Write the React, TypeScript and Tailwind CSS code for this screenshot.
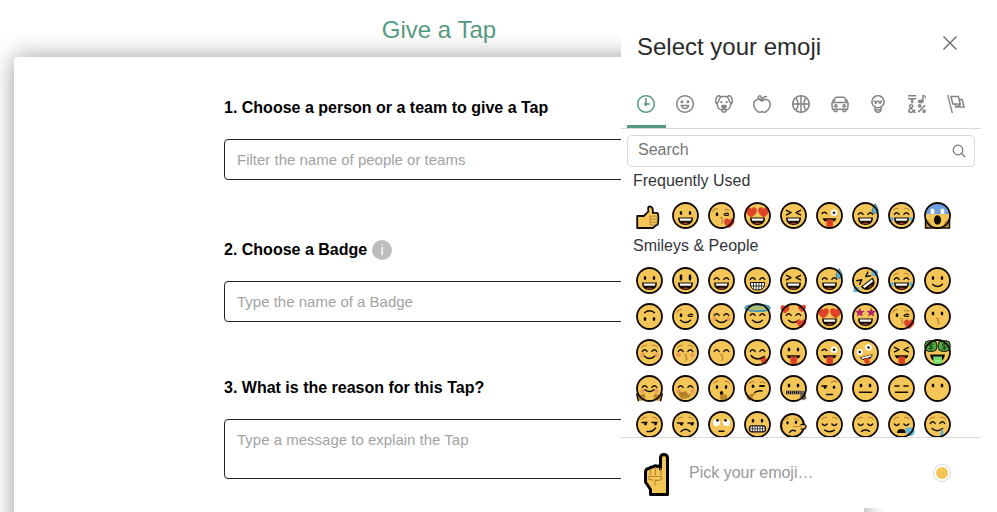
import type { ReactNode } from "react";

type Category = {
  name: string;
  paths: string[];
};

type Emoji = {
  name: string;
  art: ReactNode;
  bare?: boolean;
};

const RING =
  "M12 0C5.373 0 0 5.373 0 12s5.373 12 12 12 12-5.373 12-12S18.627 0 12 0m0 22C6.486 22 2 17.514 2 12S6.486 2 12 2s10 4.486 10 10-4.486 10-10 10";

const categories: Category[] = [
  {
    name: "Frequently Used",
    paths: ["M13 4h-2l-.001 7H9v2h2v2h2v-2h4v-2h-4z", RING],
  },
  {
    name: "Smileys & People",
    paths: [
      RING,
      "M8 7a2 2 0 1 0-.001 3.999A2 2 0 0 0 8 7M16 7a2 2 0 1 0-.001 3.999A2 2 0 0 0 16 7M15.232 15c-.693 1.195-1.87 2-3.349 2-1.477 0-2.655-.805-3.347-2H15m3-2H6a6 6 0 1 0 12 0",
    ],
  },
  {
    name: "Animals & Nature",
    paths: [
      "M15.5 8a1.5 1.5 0 1 0 .001 3.001A1.5 1.5 0 0 0 15.5 8M8.5 8a1.5 1.5 0 1 0 .001 3.001A1.5 1.5 0 0 0 8.5 8",
      "M18.933 0h-.027c-.97 0-2.138.787-3.018 1.497-1.274-.374-2.612-.51-3.887-.51-1.285 0-2.616.133-3.874.517C7.245.79 6.069 0 5.093 0h-.027C3.352 0 .07 2.67.002 7.026c-.039 2.479.276 4.238 1.04 5.013.254.258.882.677 1.295.882.191 3.177.922 5.238 2.536 6.38.897.637 2.187.949 3.2 1.102C8.04 20.6 8 20.795 8 21c0 1.773 2.35 3 4 3 1.648 0 4-1.227 4-3 0-.201-.038-.393-.072-.586 2.573-.385 5.435-1.877 5.925-7.587.396-.22.887-.568 1.104-.788.763-.774 1.079-2.534 1.04-5.013C23.929 2.67 20.646 0 18.933 0M3.223 9.135c-.237.281-.837 1.155-.884 1.238-.15-.41-.368-1.349-.337-3.291.051-3.281 2.478-4.972 3.091-5.031.256.015.731.27 1.265.646-1.11 1.171-2.275 2.915-2.352 5.125-.133.546-.398.858-.783 1.313M12 22c-.901 0-1.954-.693-2-1 0-.654.475-1.236 1-1.602V20a1 1 0 1 0 2 0v-.602c.524.365 1 .947 1 1.602-.046.307-1.099 1-2 1m3-3.48v.02a4.752 4.752 0 0 0-1.262-1.02c1.092-.516 2.239-1.334 2.239-2.217 0-1.842-1.781-2.195-3.977-2.195-2.196 0-3.978.354-3.978 2.195 0 .883 1.148 1.701 2.238 2.217A4.8 4.8 0 0 0 9 18.539v-.025c-1-.076-2.182-.281-2.973-.842-1.301-.92-1.838-3.045-1.853-6.478l.023-.041c.496-.826 1.49-1.45 1.804-3.102 0-2.047 1.357-3.631 2.362-4.522C9.37 3.178 10.555 3 11.948 3c1.447 0 2.685.192 3.733.57 1 .9 2.316 2.465 2.316 4.48.313 1.651 1.307 2.275 1.803 3.102.035.058.068.117.102.178-.059 5.967-1.949 7.01-4.902 7.19m6.628-8.202c-.037-.065-.074-.13-.113-.195a7.587 7.587 0 0 0-.739-.987c-.385-.455-.648-.768-.782-1.313-.076-2.209-1.241-3.954-2.353-5.124.531-.376 1.004-.63 1.261-.647.636.071 3.044 1.764 3.096 5.031.027 1.81-.347 3.218-.37 3.235",
    ],
  },
  {
    name: "Food & Drink",
    paths: [
      "M17 4.978c-1.838 0-2.876.396-3.68.934.513-1.172 1.768-2.934 4.68-2.934a1 1 0 0 0 0-2c-2.921 0-4.629 1.365-5.547 2.512-.064.078-.119.162-.18.244C11.73 1.838 10.798.023 9.207.023 8.579.022 7.85.306 7 .978 5.027 2.54 5.329 3.902 6.492 4.999 3.609 5.222 0 7.352 0 12.969c0 4.582 4.961 11.009 9 11.009 1.975 0 2.371-.486 3-1 .629.514 1.025 1 3 1 4.039 0 9-6.418 9-11 0-5.953-4.055-8-7-8M8.242 2.546c.641-.508.943-.523.965-.523.426.169.975 1.405 1.357 3.055-1.527-.629-2.741-1.352-2.98-1.846.059-.112.241-.356.658-.686M15 21.978c-1.08 0-1.21-.109-1.559-.402l-.176-.146c-.367-.302-.816-.452-1.266-.452s-.898.15-1.266.452l-.176.146c-.347.292-.477.402-1.557.402-2.813 0-7-5.389-7-9.009 0-5.823 4.488-5.991 5-5.991 1.939 0 2.484.471 3.387 1.251l.323.276a1.995 1.995 0 0 0 2.58 0l.323-.276c.902-.78 1.447-1.251 3.387-1.251.512 0 5 .168 5 6 0 3.617-4.187 9-7 9",
    ],
  },
  {
    name: "Activity",
    paths: [
      "M12 0C5.373 0 0 5.373 0 12s5.373 12 12 12 12-5.373 12-12S18.627 0 12 0m9.949 11H17.05c.224-2.527 1.232-4.773 1.968-6.113A9.966 9.966 0 0 1 21.949 11M13 11V2.051a9.945 9.945 0 0 1 4.432 1.564c-.858 1.491-2.156 4.22-2.392 7.385H13zm-2 0H8.961c-.238-3.165-1.536-5.894-2.393-7.385A9.95 9.95 0 0 1 11 2.051V11zm0 2v8.949a9.937 9.937 0 0 1-4.432-1.564c.857-1.492 2.155-4.221 2.393-7.385H11zm4.04 0c.236 3.164 1.534 5.893 2.392 7.385A9.92 9.92 0 0 1 13 21.949V13h2.04zM4.982 4.887C5.718 6.227 6.726 8.473 6.951 11h-4.9a9.977 9.977 0 0 1 2.931-6.113M2.051 13h4.9c-.226 2.527-1.233 4.771-1.969 6.113A9.972 9.972 0 0 1 2.051 13m16.967 6.113c-.735-1.342-1.744-3.586-1.968-6.113h4.899a9.961 9.961 0 0 1-2.931 6.113",
    ],
  },
  {
    name: "Travel & Places",
    paths: [
      "M6.5 12C5.122 12 4 13.121 4 14.5S5.122 17 6.5 17 9 15.879 9 14.5 7.878 12 6.5 12m0 3c-.275 0-.5-.225-.5-.5s.225-.5.5-.5.5.225.5.5-.225.5-.5.5M17.5 12c-1.378 0-2.5 1.121-2.5 2.5s1.122 2.5 2.5 2.5 2.5-1.121 2.5-2.5-1.122-2.5-2.5-2.5m0 3c-.275 0-.5-.225-.5-.5s.225-.5.5-.5.5.225.5.5-.225.5-.5.5",
      "M22.482 9.494l-1.039-.346L21.4 9h.6c.552 0 1-.439 1-.992 0-.006-.003-.008-.003-.008H23c0-1-.889-2-1.984-2h-.642l-.731-1.717C19.262 3.012 18.091 2 16.764 2H7.236C5.909 2 4.738 3.012 4.357 4.283L3.626 6h-.642C1.889 6 1 7 1 8h.003S1 8.002 1 8.008C1 8.561 1.448 9 2 9h.6l-.043.148-1.039.346a2.001 2.001 0 0 0-1.359 2.097l.751 7.508a1 1 0 0 0 .994.901H3v1c0 1.103.896 2 2 2h2c1.104 0 2-.897 2-2v-1h6v1c0 1.103.896 2 2 2h2c1.104 0 2-.897 2-2v-1h1.096a.999.999 0 0 0 .994-.901l.751-7.508a2.001 2.001 0 0 0-1.359-2.097M6.273 4.857C6.402 4.43 6.788 4 7.236 4h9.527c.448 0 .834.43.963.857L19.313 9H4.688l1.585-4.143zM7 21H5v-1h2v1zm12 0h-2v-1h2v1zm2.189-3H2.811l-.662-6.607L3 11h18l.852.393L21.189 18z",
    ],
  },
  {
    name: "Objects",
    paths: [
      "M12 0a9 9 0 0 0-5 16.482V21s2.035 3 5 3 5-3 5-3v-4.518A9 9 0 0 0 12 0zm0 2c3.86 0 7 3.141 7 7s-3.14 7-7 7-7-3.141-7-7 3.14-7 7-7zM9 17.477c.94.332 1.946.523 3 .523s2.06-.19 3-.523v.834c-.91.436-1.925.689-3 .689a6.924 6.924 0 0 1-3-.69v-.833zm.236 3.07A8.854 8.854 0 0 0 12 21c.965 0 1.888-.167 2.758-.451C14.155 21.173 13.153 22 12 22c-1.102 0-2.117-.789-2.764-1.453z",
      "M14.745 12.449h-.004c-.852-.024-1.188-.858-1.577-1.824-.421-1.061-.703-1.561-1.182-1.566h-.009c-.481 0-.783.497-1.235 1.537-.436.982-.801 1.811-1.636 1.791l-.276-.043c-.565-.171-.853-.691-1.284-1.794-.125-.313-.202-.632-.27-.913-.051-.213-.127-.53-.195-.634C7.067 9.004 7.039 9 6.99 9A1 1 0 0 1 7 7h.01c1.662.017 2.015 1.373 2.198 2.134.486-.981 1.304-2.058 2.797-2.075 1.531.018 2.28 1.153 2.731 2.141l.002-.008C14.944 8.424 15.327 7 16.979 7h.032A1 1 0 1 1 17 9h-.011c-.149.076-.256.474-.319.709a6.484 6.484 0 0 1-.311.951c-.429.973-.79 1.789-1.614 1.789",
    ],
  },
  {
    name: "Symbols",
    paths: [
      "M0 0h11v2H0zM4 11h3V6h4V4H0v2h4zM15.5 17c1.381 0 2.5-1.116 2.5-2.493s-1.119-2.493-2.5-2.493S13 13.13 13 14.507 14.119 17 15.5 17m0-2.986c.276 0 .5.222.5.493 0 .272-.224.493-.5.493s-.5-.221-.5-.493.224-.493.5-.493M21.5 19.014c-1.381 0-2.5 1.116-2.5 2.493S20.119 24 21.5 24s2.5-1.116 2.5-2.493-1.119-2.493-2.5-2.493m0 2.986a.497.497 0 0 1-.5-.493c0-.271.224-.493.5-.493s.5.222.5.493a.497.497 0 0 1-.5.493M22 13l-9 9 1.513 1.5 8.99-9.009zM17 11c2.209 0 4-1.119 4-2.5V2s.985-.161 1.498.949C23.01 4.055 23 6 23 6s1-1.119 1-3.135C24-.02 21 0 21 0h-2v6.347A5.853 5.853 0 0 0 17 6c-2.209 0-4 1.119-4 2.5s1.791 2.5 4 2.5M10.297 20.482l-1.475-1.585a47.54 47.54 0 0 1-1.442 1.129c-.307-.288-.989-1.016-2.045-2.183.902-.836 1.479-1.466 1.729-1.892s.376-.871.376-1.336c0-.592-.273-1.178-.818-1.759-.546-.581-1.329-.871-2.349-.871-1.008 0-1.79.293-2.344.879-.556.587-.832 1.181-.832 1.784 0 .813.419 1.748 1.256 2.805-.847.614-1.444 1.208-1.794 1.784a3.465 3.465 0 0 0-.523 1.833c0 .857.308 1.56.924 2.107.616.549 1.423.823 2.42.823 1.173 0 2.444-.379 3.813-1.137L8.235 24h2.819l-2.09-2.383 1.333-1.135zm-6.736-6.389a1.02 1.02 0 0 1 .73-.286c.31 0 .559.085.747.254a.849.849 0 0 1 .283.659c0 .518-.419 1.112-1.257 1.784-.536-.651-.805-1.231-.805-1.742a.901.901 0 0 1 .302-.669M3.74 22c-.427 0-.778-.116-1.057-.349-.279-.232-.418-.487-.418-.766 0-.594.509-1.288 1.527-2.083.968 1.134 1.717 1.946 2.248 2.438-.921.507-1.686.76-2.3.76",
    ],
  },
  {
    name: "Flags",
    paths: [
      "M0 0l6.084 24H8L1.916 0zM21 5h-4l-1-4H4l3 12h3l1 4h13L21 5zM6.563 3h7.875l2 8H8.563l-2-8zm8.832 10l-2.856 1.904L12.063 13h3.332zM19 13l-1.5-6h1.938l2 8H16l3-2z",
    ],
  },
];

const YELLOW = "#f4c658";
const BROWN = "#b98536";
const HAND = "#bd8730";
const INK = "#120c06";
const RED = "#df4429";
const BLUE = "#5fb4d9";

// Every face is drawn on a 27 unit square, one unit per pixel.

const Line = ({ d, color = INK, w = 1.4 }: { d: string; color?: string; w?: number }) => (
  <path d={d} fill="none" stroke={color} strokeWidth={w} strokeLinecap="round" strokeLinejoin="round" />
);

const Dots = ({ ry = 2, y = 11 }: { ry?: number; y?: number }) => (
  <g fill={INK}>
    <ellipse cx="9" cy={y} rx="1.3" ry={ry} />
    <ellipse cx="18" cy={y} rx="1.3" ry={ry} />
  </g>
);

const HappyEyes = () => <Line d="M6.3 12.4q2.4-3.4 4.8 0M15.9 12.4q2.4-3.4 4.8 0" />;
const ShutEyes = () => <Line d="M6.3 13q2.4 3 4.8 0M15.9 13q2.4 3 4.8 0" />;
const SquintEyes = () => <Line d="M6.5 8.3l4.5 2.3-4.5 2.3M20.5 8.3l-4.5 2.3 4.5 2.3" />;
const Brows = () => <Line d="M5.8 8.2q1.6-2.4 4.6-1.8M21.2 8.2q-1.6-2.4-4.6-1.8" color={BROWN} w={1.1} />;
const WinkEye = () => <Line d="M16 12.6q2.2-2.6 4.6-.8M16.6 13.2l3.6.2" w={1.2} />;

const OpenMouth = () => (
  <g>
    <path d="M6 15.5h15q0 7.6-7.5 7.6T6 15.5z" fill={INK} />
    <path d="M7.6 16.6h11.8l-.6 2.2H8.2z" fill="#fff" />
    <path d="M10 21.3q3.5-1.6 7 0-3.5 1.6-7 0z" fill="#b0402a" />
  </g>
);

const Smile = () => <Line d="M8.5 17.2q5 4.6 10 0" />;
const Kiss = () => <Line d="M12.6 15.4q3.2.4 1 2.6 3 .8 0 3.2" color={BROWN} w={1.2} />;
const Cheeks = () => (
  <g fill="#ec9c5b">
    <circle cx="6.6" cy="16" r="2.2" />
    <circle cx="20.4" cy="16" r="2.2" />
  </g>
);

const Tongue = () => (
  <g>
    <path d="M6.5 16.2h14l-1.6 3H8.3z" fill={INK} />
    <path d="M10.4 17.4H17v5.2q0 3.2-3.3 3.2t-3.3-3.2z" fill={RED} />
    <path d="M13.7 18v4" stroke="#a92f1c" strokeWidth=".8" />
  </g>
);

const Heart = ({ x, y, s = 1 }: { x: number; y: number; s?: number }) => (
  <path
    transform={`translate(${x} ${y}) scale(${s})`}
    d="M0 4.6C-3.6 2-4.8.2-4.4-1.8-3.8-4.2-1-4.3 0-2.2 1-4.3 3.8-4.2 4.4-1.8 4.8.2 3.6 2 0 4.6z"
    fill={RED}
  />
);

const Star = ({ x }: { x: number }) => (
  <path
    transform={`translate(${x} 9.4)`}
    d="M0-4.6l1.3 3 3.4.2-2.5 2.2.8 3.4L0 2.4l-3 1.8.8-3.4-2.5-2.2 3.4-.2z"
    fill="#b2266b"
  />
);

const Tears = () => (
  <g fill={BLUE}>
    <path d="M5.8 15q-.6 5.4-3.4 5.6Q.4 20 .8 17.2 2 15 5.8 15z" />
    <path d="M21.2 15q.6 5.4 3.4 5.6 2-.6 1.6-3.4-1.2-2.2-5-2.2z" />
  </g>
);

const BigEye = ({ x, y, r = 3.3 }: { x: number; y: number; r?: number }) => (
  <g>
    <circle cx={x} cy={y} r={r} fill="#fff" />
    <circle cx={x} cy={y} r="1.3" fill={INK} />
  </g>
);

const Sweat = () => (
  <path
    d="M23.2 1.6q3.2 5 3.2 6.8 0 3-3.2 3-3.2 0-3.2-3 0-1.600 3.200-6.800z"
    fill={BLUE}
    stroke={INK}
    strokeWidth=".4"
  />
);

const thumbsUp: Emoji = {
  name: "Thumbs up",
  bare: true,
  art: (
    <g>
      <path
        d="M1.2 14h6.6l4.4-4.300V6.200q0-1.800 1.600-1.800 3.800.6 3 6.400h3.600q2 .2 1.700 2.400.9 1.400 0 2.600.9 1.400 0 2.700.6 1.300-.2 2.400.2 2.500-2 2.500L17 26H1.200z"
        fill={YELLOW}
        stroke={INK}
        strokeWidth="1.8"
        strokeLinejoin="round"
      />
      <path d="M14 14.200h7.500M14 17.200h7.900M14 20.200h7.500M14 23h5M14 14v9" fill="none" stroke={BROWN} strokeWidth="1" />
    </g>
  ),
};

const grinning: Emoji = { name: "Grinning", art: <><Dots /><OpenMouth /></> };

const kissHeart: Emoji = {
  name: "Blowing a kiss",
  art: (
    <>
      <ellipse cx="9" cy="12.2" rx="1.3" ry="2" fill={INK} />
      <WinkEye />
      <Line d="M5 9.4q1.200-3 4.200-2.800M16.500 8q2.500-1.400 4.300.4" color={BROWN} w={1.1} />
      <Kiss />
      <Heart x={21.3} y={20.8} s={1.15} />
    </>
  ),
};

const heartEyes: Emoji = {
  name: "Heart eyes",
  art: <><OpenMouth /><Heart x={7.3} y={9.8} s={1.25} /><Heart x={19.7} y={9.8} s={1.25} /></>,
};

const squinting: Emoji = { name: "Squinting", art: <><SquintEyes /><OpenMouth /></> };

const winkTongue: Emoji = {
  name: "Winking with tongue",
  art: <><Line d="M6 11.500q2.200-2.600 4.800 0" /><BigEye x={18} y={10.7} /><Tongue /></>,
};

const sweatGrin: Emoji = { name: "Grinning with sweat", art: <><HappyEyes /><OpenMouth /><Sweat /></> };
const joy: Emoji = { name: "Tears of joy", art: <><Brows /><HappyEyes /><OpenMouth /><Tears /></> };

const scream: Emoji = {
  name: "Screaming",
  art: (
    <>
      <path d="M2 12a11.500 11.500 0 0 1 23 0z" fill="#6f9fe0" />
      <path d="M1 26V17q3.500 0 6 4.500V26zM26 26V17q-3.500 0-6 4.500V26z" fill="#c9912f" />
      <path d="M1.500 17v9h24v-9" fill="none" stroke={INK} strokeWidth="1.5" />
      <g fill="#fff" stroke="#9aa6b8" strokeWidth=".6">
        <rect x="6.5" y="6.5" width="4" height="6" rx="1.8" />
        <rect x="16.5" y="6.5" width="4" height="6" rx="1.8" />
      </g>
      <ellipse cx="13.5" cy="18" rx="3.6" ry="4.7" fill={INK} />
    </>
  ),
};

const frequent: Emoji[] = [
  thumbsUp,
  grinning,
  kissHeart,
  heartEyes,
  squinting,
  winkTongue,
  sweatGrin,
  joy,
  scream,
];

const smileys: Emoji[] = [
  grinning,
  { name: "Big eyes", art: <><Dots ry={3.2} y={10.5} /><OpenMouth /></> },
  { name: "Smiling eyes", art: <><HappyEyes /><OpenMouth /></> },
  {
    name: "Beaming",
    art: (
      <>
        <HappyEyes />
        <path d="M6.500 15.500h14v3q-1 4.500-7 4.500t-7-4.500z" fill="#fff" stroke={INK} />
        <path d="M6.500 19h14M9.500 15.500V22M12.200 15.500V23M14.900 15.500V23M17.600 15.500V22" stroke={INK} strokeWidth=".8" />
      </>
    ),
  },
  squinting,
  sweatGrin,
  {
    name: "Rolling on the floor",
    art: (
      <>
        <g transform="rotate(-38 13.5 13.5)"><SquintEyes /><OpenMouth /></g>
        <path d="M19 5q4-3.500 7-1 .5 5-3.500 5.500-2.500-.5-3.500-4.500zM1.500 25q-1-5 3.500-5.500l2.500 1.500q0 5-6 4z" fill={BLUE} />
      </>
    ),
  },
  joy,
  { name: "Slight smile", art: <><Dots /><Smile /></> },

  {
    name: "Upside down",
    art: <><Line d="M8.500 9.800q5-4 10 0" /><Dots y={16} /></>,
  },
  {
    name: "Winking",
    art: (
      <>
        <ellipse cx="9" cy="12.2" rx="1.3" ry="2" fill={INK} />
        <WinkEye />
        <Line d="M5 9.4q1.200-3 4.200-2.800" color={BROWN} w={1.1} />
        <Smile />
      </>
    ),
  },
  { name: "Blushing", art: <><Cheeks /><HappyEyes /><Smile /></> },
  {
    name: "Halo",
    art: (
      <>
        <HappyEyes />
        <Smile />
        <ellipse cx="13.5" cy="5" rx="12.3" ry="3.2" fill="#a9bd76" stroke="#4597b5" strokeWidth="1.8" />
      </>
    ),
  },
  {
    name: "Smiling with hearts",
    art: (
      <>
        <HappyEyes />
        <Smile />
        <Heart x={5} y={6} />
        <Heart x={22} y={5} s={0.9} />
        <Heart x={21.3} y={20.5} s={1.05} />
      </>
    ),
  },
  heartEyes,
  { name: "Star struck", art: <><OpenMouth /><Star x={7.8} /><Star x={19.2} /></> },
  kissHeart,
  { name: "Kissing", art: <><Dots y={10.5} /><Kiss /></> },

  { name: "Relaxed", art: <><Cheeks /><Brows /><HappyEyes /><Smile /></> },
  { name: "Kissing, eyes closed", art: <><Cheeks /><Brows /><HappyEyes /><Kiss /></> },
  { name: "Kissing, smiling eyes", art: <><HappyEyes /><Kiss /></> },
  {
    name: "Yum",
    art: (
      <>
        <HappyEyes />
        <path d="M16 20l4.500-2.500q4 3 2.500 6.500-2.500 2.500-5 0z" fill={RED} />
        <Line d="M7 16.500q5.500 6.500 13.500.8" />
      </>
    ),
  },
  { name: "Tongue out", art: <><Dots y={10.5} /><Tongue /></> },
  winkTongue,
  {
    name: "Zany",
    art: (
      <>
        <BigEye x={7.8} y={13} r={3} />
        <BigEye x={16.5} y={8.5} r={3.3} />
        <g transform="rotate(-14 13.5 18)">
          <path d="M8 17h13q-1 4.200-6.500 4.200T8 17z" fill={INK} />
          <path d="M9.200 17.500h10.600l-.6 1.600H9.800z" fill="#fff" />
          <path d="M11.500 19.500h5v3.800q-1 2-2.500 2t-2.500-2z" fill={RED} />
        </g>
      </>
    ),
  },
  { name: "Squinting with tongue", art: <><SquintEyes /><Tongue /></> },
  {
    name: "Money mouth",
    art: (
      <>
        <g fill="#4faa43" stroke={INK}>
          <rect x=".8" y="1.8" width="12" height="10.5" rx="4" />
          <rect x="14.2" y="1.8" width="12" height="10.5" rx="4" />
        </g>
        <Line
          d="M9 5.200q-4-1-4 .9 0 1.200 2 1.300 2.200.2 2 1.500-.2 1.600-4 .7M7 4v6.800M22.200 5.200q-4-1-4 .9 0 1.200 2 1.300 2.200.2 2 1.500-.2 1.600-4 .7M20.200 4v6.800"
          color="#173c14"
          w={0.9}
        />
        <path d="M6 15.500h15q-1 5.500-4 6.500h-7q-3-1-4-6.500z" fill={INK} />
        <path d="M9.300 17.500h8.700v8H9.300z" fill="#72dc6a" />
        <path d="M11 22h5.500" stroke="#9af293" strokeWidth="1.5" />
      </>
    ),
  },

  {
    name: "Hugging",
    art: (
      <>
        <Cheeks />
        <HappyEyes />
        <Line d="M9 14.800q4.500 3.500 9 0" />
        <path
          d="M.7 19l2.500.8 5.500-1 .8 3.500-2.500 3.200-4.500.3zM26.300 19l-2.500.8-5.500-1-.8 3.500 2.500 3.200 4.500.3z"
          fill={HAND}
        />
        <Line d="M.7 19l1.600 6.700M26.300 19l-1.600 6.700" />
      </>
    ),
  },
  {
    name: "Hand over mouth",
    art: (
      <>
        <Cheeks />
        <HappyEyes />
        <path d="M6.500 16l3 1 5-1 1.500 3.500 4-1-3.500 4.500L10 24q-4-2-3.500-8z" fill={HAND} />
        <Line d="M9 18.500l1.500 2M12 17.800l1.500 2" color="#79501a" w={0.8} />
      </>
    ),
  },
  {
    name: "Shushing",
    art: (
      <>
        <Brows />
        <Dots y={12} />
        <path d="M12.500 15.500H15V19l4 1.200V24l-3.500 2-3.500-2z" fill={HAND} />
        <circle cx="13.5" cy="18" r="1.7" fill={INK} />
      </>
    ),
  },
  {
    name: "Thinking",
    art: (
      <>
        <Line d="M5.500 8.500q2-3 5-1.500M16.500 7.500q2.500-1.500 4.500.8" color={BROWN} w={1.1} />
        <ellipse cx="9" cy="11.3" rx="1.3" ry="1.8" fill={INK} />
        <Line d="M16 11h4" w={1.8} />
        <Line d="M10.500 17.500q4-2.500 7.500-1.500" />
        <path d="M3 17.500L5 20l6-2.500.5 1.800-2.500 1.500-.5 3.700-4 1q-2.500-2-1.500-8z" fill={HAND} />
      </>
    ),
  },
  {
    name: "Zipper mouth",
    art: (
      <>
        <Dots y={10.5} />
        <path d="M6 17.500h15" stroke="#837a65" strokeWidth="4" />
        <path d="M6 17.500h15" stroke={INK} strokeWidth="2.5" strokeDasharray="1 1" />
        <path d="M20 16h4.500l2 7.500-3.500 2-2.500-3z" fill="#696151" />
      </>
    ),
  },
  {
    name: "Raised eyebrow",
    art: (
      <>
        <Dots y={12.3} ry={1.7} />
        <Line d="M5.800 11h5" />
        <Line d="M15.500 7.500q2.500-2.500 5.500-.5" color={BROWN} w={1.2} />
        <Line d="M10.500 19.500h6" />
      </>
    ),
  },
  { name: "Neutral", art: <><Dots y={10.5} /><Line d="M7.500 17.200h12" w={1.6} /></> },
  { name: "Expressionless", art: <Line d="M7 11h4M16 11h4M7.500 17.200h12" w={1.6} /> },
  { name: "No mouth", art: <Dots y={10.5} /> },

  {
    name: "Smirking",
    art: (
      <>
        <Brows />
        <Line d="M6 11.500h5M16 11.500h5M11 20.500q5.500.8 8.500-3.500" />
        <circle cx="9.5" cy="13" r="1.4" fill={INK} />
        <circle cx="19.5" cy="13" r="1.4" fill={INK} />
      </>
    ),
  },
  {
    name: "Unamused",
    art: (
      <>
        <Brows />
        <Line d="M5.500 12H11M16 12h5.500M9 20.500q4.500-4.500 9 0" />
        <circle cx="9.5" cy="13.2" r="1.4" fill={INK} />
        <circle cx="20" cy="13.2" r="1.4" fill={INK} />
      </>
    ),
  },
  {
    name: "Rolling eyes",
    art: (
      <>
        <circle cx="8.5" cy="11.5" r="3.6" fill="#fff" />
        <circle cx="18.5" cy="11.5" r="3.6" fill="#fff" />
        <circle cx="9.5" cy="9.3" r="1.4" fill={INK} />
        <circle cx="17.5" cy="9.3" r="1.4" fill={INK} />
        <Line d="M11 20.300h5" />
      </>
    ),
  },
  {
    name: "Grimacing",
    art: (
      <>
        <Dots y={9.8} />
        <rect x="5.5" y="14.8" width="16" height="6" rx="2.5" fill="#fff" stroke={INK} strokeWidth="1.3" />
        <path d="M5.500 17.800h16M8.500 15v6M11 15v6M13.500 15v6M16 15v6M18.500 15v6" stroke={INK} strokeWidth=".7" />
      </>
    ),
  },
  {
    name: "Lying",
    bare: true,
    art: (
      <>
        <circle cx="12.5" cy="14.5" r="11.5" fill={YELLOW} stroke={INK} strokeWidth="2" />
        <path d="M21 13.500q5.300-.5 5.200 2.500-.8 2.500-5.200 2z" fill={YELLOW} stroke={INK} strokeWidth="1.2" />
        <path d="M13 14.200h9v3.200h-8z" fill={YELLOW} />
        <Line d="M4.500 8.800q2-2 4-1M14.500 7.800q2-1 4 1M13.500 15.500h8" color={BROWN} w={1.1} />
        <ellipse cx="7.5" cy="11.8" rx="1.2" ry="1.8" fill={INK} />
        <ellipse cx="16" cy="11.3" rx="1.2" ry="1.8" fill={INK} />
        <Line d="M9.500 21.500q2-3.500 6-1.500" />
      </>
    ),
  },
  { name: "Relieved", art: <><Brows /><ShutEyes /><Line d="M8.500 19.200q5 3.200 10 0" /></> },
  {
    name: "Pensive",
    art: <><Brows /><ShutEyes /><Line d="M9.500 20.300q4-2.600 8 0" /></>,
  },
  {
    name: "Sleepy",
    art: (
      <>
        <Brows />
        <ShutEyes />
        <path d="M9 22q0-4 4.500-4t4 4z" fill={INK} />
        <path d="M17.500 16.500q3.500 1 6-.5 3.500 1.500 3 5.500-1.500 4-5 3.500-4-1.500-4-8.500z" fill={BLUE} />
      </>
    ),
  },
  {
    name: "Drooling",
    art: (
      <>
        <Brows />
        <HappyEyes />
        <Line d="M8 17.500q5 4.500 10.500 0" />
        <path d="M17 18.500h1.800q1 3.500.2 7h-3q.8-3.500 1-7z" fill={BLUE} />
      </>
    ),
  },
];

function EmojiGrid({ title, emojis }: { title: string; emojis: Emoji[] }) {
  return (
    <section>
      <h3 className="h-[29px] pl-px text-base leading-[25px] text-[#333639]">{title}</h3>
      <div className="flex flex-wrap">
        {emojis.map((emoji, i) => (
          <button key={i} type="button" aria-label={emoji.name} className="size-9 shrink-0 p-1">
            <svg viewBox="0 0 27 27" className="size-[27px]">
              {!emoji.bare && <circle cx="13.5" cy="13.5" r="12.5" fill={YELLOW} />}
              {emoji.art}
              {!emoji.bare && (
                <circle cx="13.5" cy="13.5" r="12.5" fill="none" stroke={INK} strokeWidth="1.8" />
              )}
            </svg>
          </button>
        ))}
      </div>
    </section>
  );
}

function EmojiPicker() {
  return (
    <aside
      aria-label="Select your emoji"
      className="absolute top-0 right-4 w-[360px] rounded-md bg-white"
    >
      <div className="flex h-[86px] items-start justify-between pt-8 pr-5 pl-4">
        <h2 className="text-2xl leading-[30px] text-[#2b2b2b]">Select your emoji</h2>
        <button type="button" aria-label="Close" className="p-1 text-[#666]">
          <svg viewBox="0 0 14 14" className="size-3.5" fill="none" stroke="currentColor" strokeWidth="1.3">
            <path d="M.5.5l13 13M13.500.5l-13 13" />
          </svg>
        </button>
      </div>

      <nav className="flex border-b border-[#d9d9d9] px-1.5">
        {categories.map((category, i) => (
          <button
            key={category.name}
            type="button"
            aria-label={category.name}
            className={
              i === 0
                ? "flex h-[42px] flex-1 justify-center border-b-[3px] border-[#559a80] pt-[9px] text-[#559a80]"
                : "flex h-[42px] flex-1 justify-center pt-[9px] text-[#858585]"
            }
          >
            <svg viewBox="0 0 24 24" className="size-[18px]" fill="currentColor">
              {category.paths.map((d) => (
                <path key={d} d={d} />
              ))}
            </svg>
          </button>
        ))}
      </nav>

      <div className="px-1.5 pt-1.5">
        <label className="flex h-8 items-center rounded-[5px] border border-[#d9d9d9] pr-2 pl-2.5">
          <input
            type="search"
            aria-label="Search"
            placeholder="Search"
            className="min-w-0 flex-1 pb-0.5 text-base leading-5 outline-none placeholder:text-[#757575]"
          />
          <svg viewBox="0 0 14 14" className="size-3.5" fill="none" stroke="#757575" strokeWidth="1.2">
            <circle cx="6" cy="6" r="4.8" />
            <path d="M9.500 9.500l3.800 3.500" />
          </svg>
        </label>
      </div>

      <div className="mt-px h-[269px] overflow-y-auto pr-6 pl-[11px] [scrollbar-width:none]">
        <EmojiGrid title="Frequently Used" emojis={frequent} />
        <EmojiGrid title="Smileys & People" emojis={smileys} />
      </div>

      <div className="flex h-[71px] items-center border-t border-[#d9d9d9] pr-[30px] pl-[22px]">
        <svg viewBox="0 0 26 43" className="mt-0.5 h-[43px] w-[26px]">
          <path
            d="M17.500 16V4.500Q18 1.500 21 1.500t3.500 3V41.500H7.500V36.500L2.500 29V19q.5-4 4-3.500 1-2 3.500-1.500 2-2 4-.5 1.500-1 3.500.5z"
            fill={YELLOW}
            stroke="#000"
            strokeWidth="3"
            strokeLinejoin="round"
          />
          <path
            d="M7.300 16v6.500M12.500 14v8.500M18 15v7.500M5 23.500h13.500q1.500 3-2.500 3.800h-4v5.200M5 24.500q1 2.500 5 2.500"
            fill="none"
            stroke={BROWN}
            strokeWidth="1.2"
          />
        </svg>
        <p className="ml-5 text-base text-[#999]">Pick your emoji…</p>
        <button
          type="button"
          aria-label="Default skin tone"
          className="ml-auto size-[18px] rounded-full border border-[#d9d9d9] p-0.5"
        >
          <span className="block size-3 rounded-full bg-[#f4c658]" />
        </button>
      </div>
    </aside>
  );
}

const fieldClass =
  "block w-full rounded-[4px] border border-[#222] bg-white px-3 text-[15px] outline-none placeholder:text-[#a3a3a3]";

export default function App() {
  return (
    <div className="relative h-screen overflow-hidden bg-white font-['Liberation_Sans',Arial,sans-serif]">
      <main className="pr-[133px] pl-3.5">
        <h1 className="pt-[15px] text-center text-2xl leading-[30px] text-[#559a80]">Give a Tap</h1>

        <form className="mt-3 min-h-screen rounded-[4px] bg-white px-[210px] pt-[39px] shadow-[0_0_24px_rgba(0,0,0,0.4)]">
          <label htmlFor="person" className="block text-base leading-6 font-bold text-black">
            1. Choose a person or a team to give a Tap
          </label>
          <input
            id="person"
            placeholder="Filter the name of people or teams"
            className={`${fieldClass} mt-[19px] h-[41px]`}
          />

          <div className="mt-[58px] flex h-6 items-center gap-[5px]">
            <label htmlFor="badge" className="text-base leading-6 font-bold text-black">
              2. Choose a Badge
            </label>
            <button
              type="button"
              aria-label="About badges"
              className="size-5 rounded-full bg-[#bdbdbd] text-sm leading-5 text-white"
            >
              i
            </button>
          </div>
          <input
            id="badge"
            placeholder="Type the name of a Badge"
            className={`${fieldClass} mt-[19px] h-[41px]`}
          />

          <label htmlFor="reason" className="mt-[54px] block text-base leading-6 font-bold text-black">
            3. What is the reason for this Tap?
          </label>
          <textarea
            id="reason"
            placeholder="Type a message to explain the Tap"
            className={`${fieldClass} mt-[19px] h-[60px] resize-none py-2.5 leading-5`}
          />
        </form>
      </main>

      <EmojiPicker />
    </div>
  );
}
